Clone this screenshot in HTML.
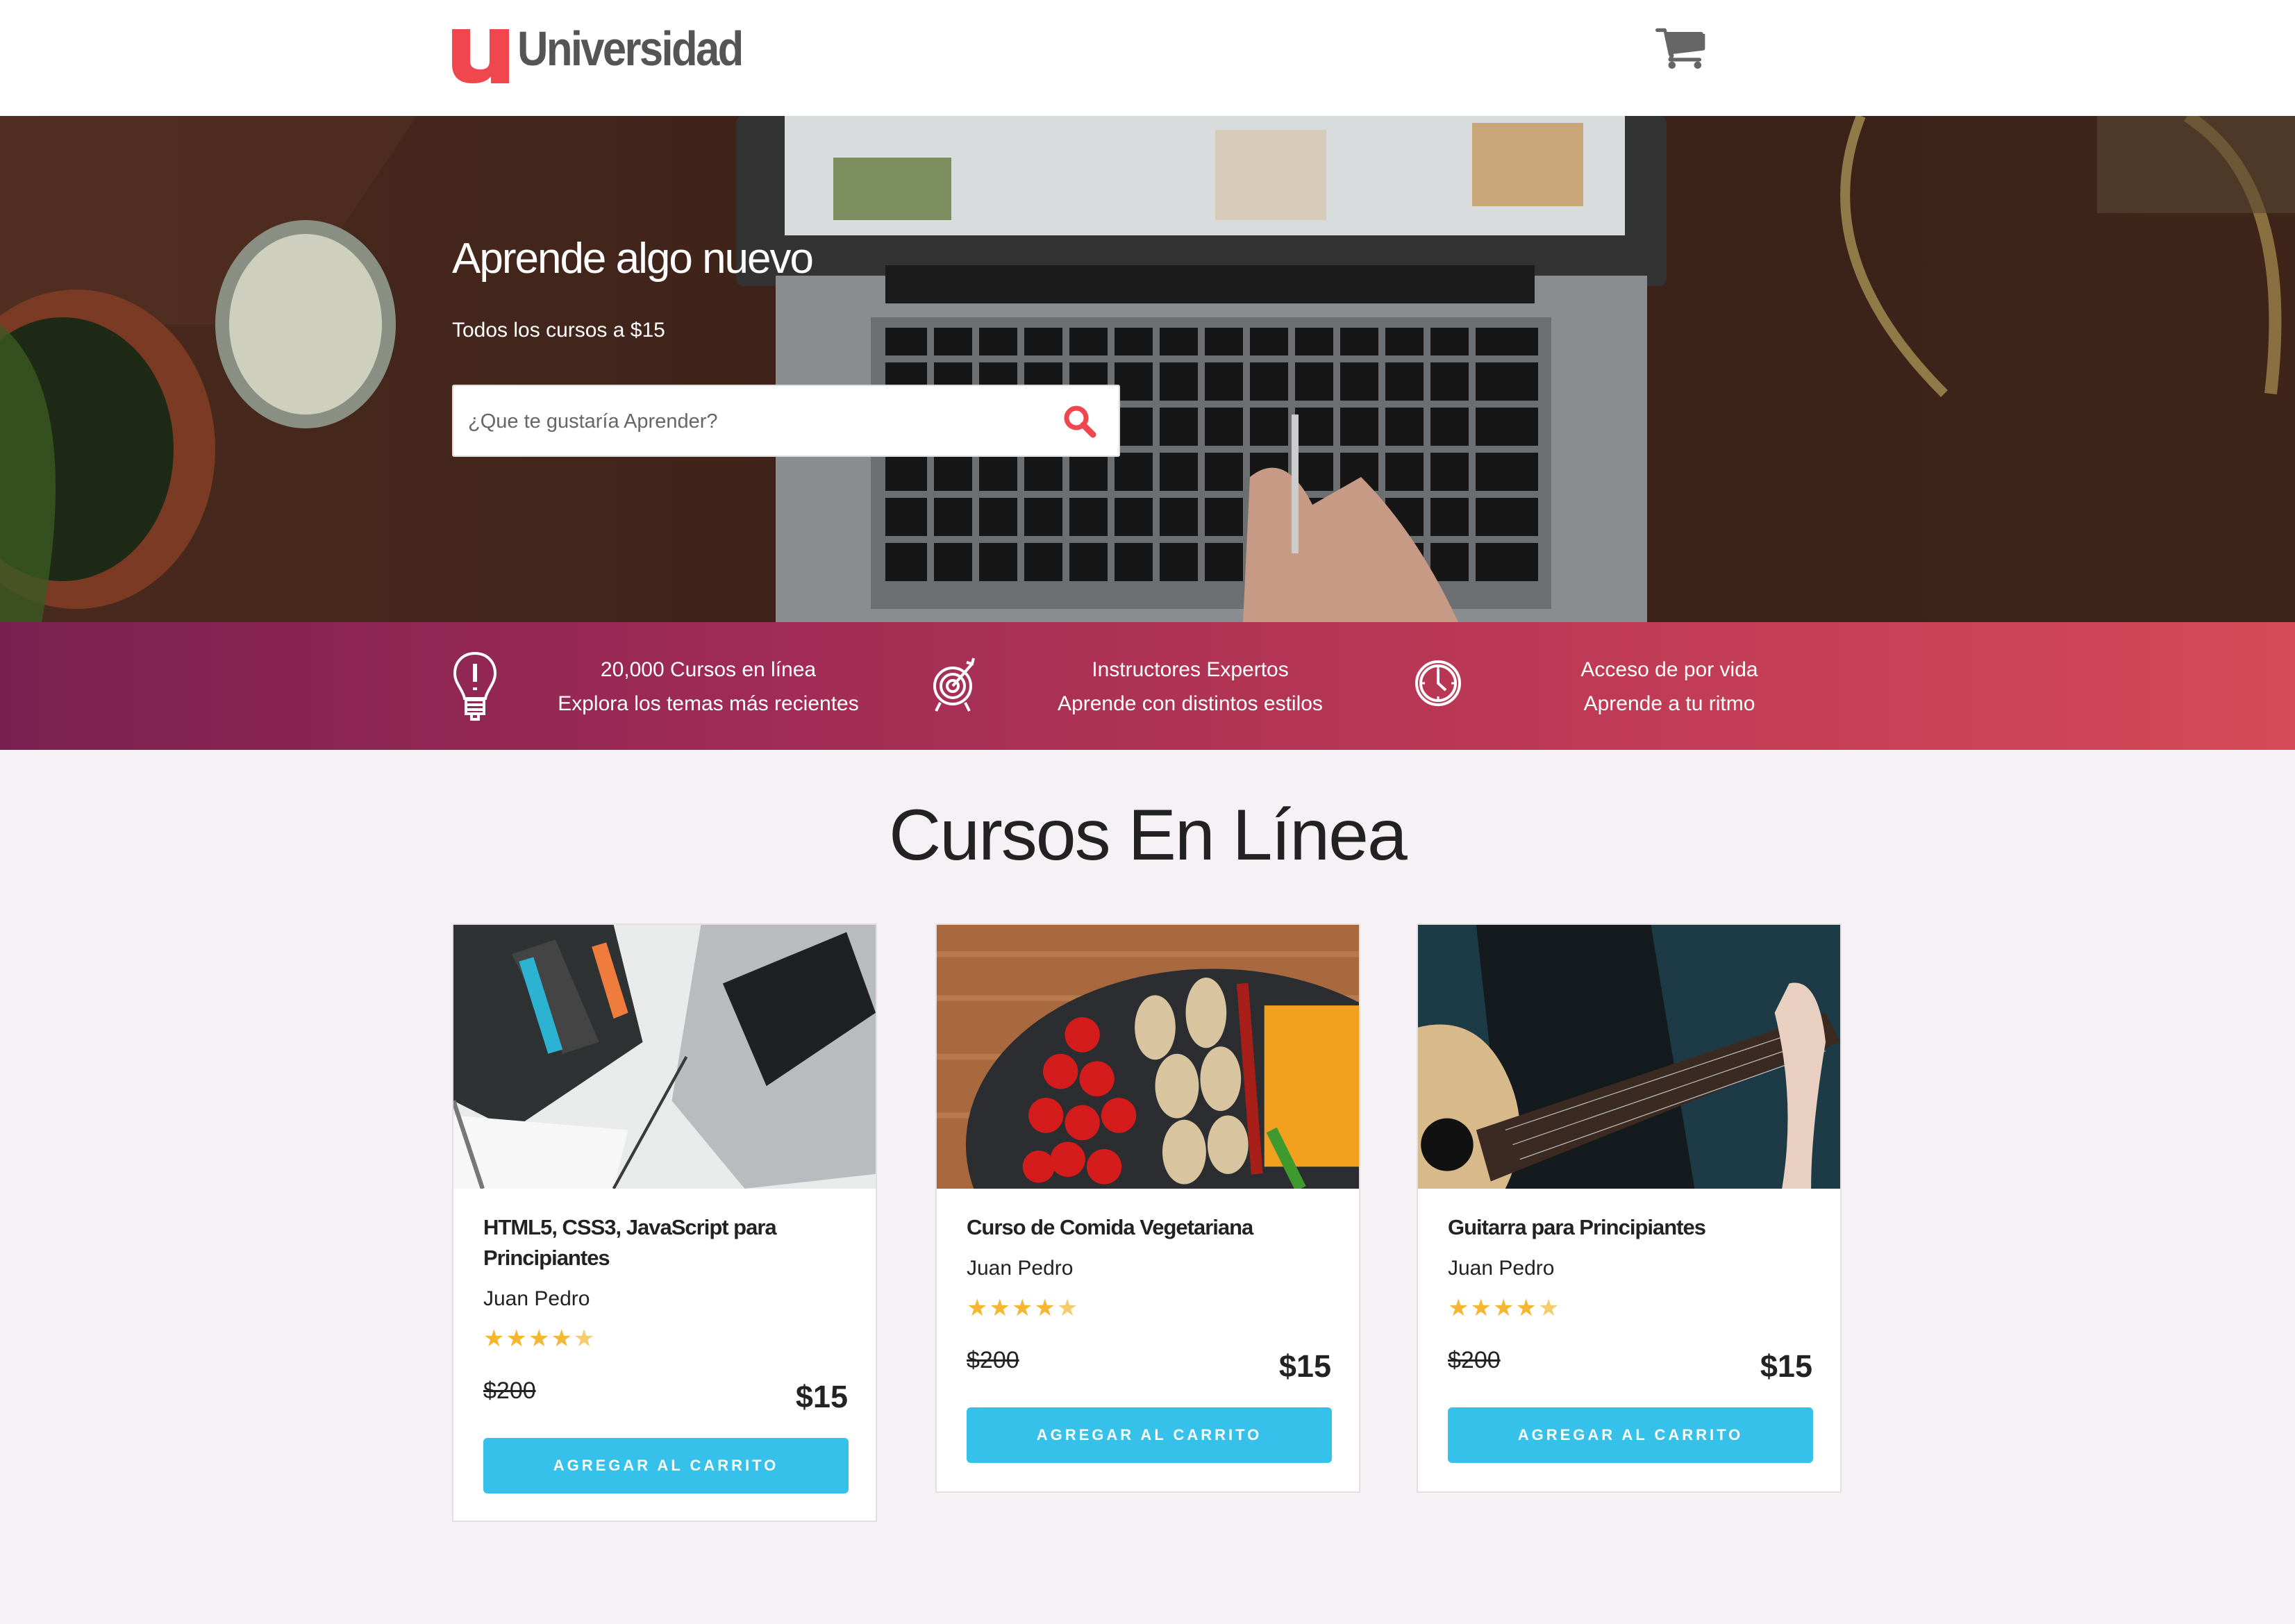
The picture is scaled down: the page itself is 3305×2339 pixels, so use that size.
<!DOCTYPE html>
<html><head><meta charset="utf-8"><style>
*{margin:0;padding:0;box-sizing:border-box}
body{width:3305px;height:2339px;background:#f5f1f4;font-family:"Liberation Sans",sans-serif;position:relative;overflow:hidden}
.abs{position:absolute}
header{position:absolute;left:0;top:0;width:3305px;height:167px;background:#fff}
.hero{position:absolute;left:0;top:167px;width:3305px;height:729px;overflow:hidden;background:#3d2219}
.bar{position:absolute;left:0;top:896px;width:3305px;height:184px;background:linear-gradient(90deg,#7a2050 0%,#a22c55 35%,#bf3a55 70%,#d44a58 100%)}
.bar .t{position:absolute;color:#fff;font-size:30px;line-height:49px;text-align:center;width:600px}
h2{position:absolute;left:0;width:3305px;text-align:center;top:1144px;font-size:104px;font-weight:400;color:#222;letter-spacing:-2px}
.card{position:absolute;top:1330px;width:612px;background:#fff;border:2px solid #e3dfe3}
.card svg{display:block}
.ct{position:absolute;left:43px;font-size:31px;font-weight:700;color:#222;line-height:44px;letter-spacing:-1px}
.au{position:absolute;left:43px;font-size:30px;color:#222}
.st{position:absolute;left:43px;color:#f5b731;font-size:34px;letter-spacing:2px}
.old{position:absolute;left:43px;font-size:34px;color:#222;text-decoration:line-through}
.new{position:absolute;right:40px;font-size:45px;font-weight:700;color:#222}
.btn{position:absolute;left:43px;width:526px;height:80px;background:#36c1ea;border-radius:6px;color:#fff;font-size:22px;font-weight:700;letter-spacing:4px;text-align:center;line-height:80px}
</style></head><body>
<header>
<svg class="abs" style="left:651px;top:42px" width="82" height="78" viewBox="0 0 82 78"><path d="M0 0H26V46Q26 58 41 58Q54 58 54 46V0H82V78H56V68Q48 78 30 78Q0 78 0 50Z" fill="#f0474f"/></svg>
<div class="abs" style="left:745px;top:30px;font-size:70px;font-weight:700;color:#555;letter-spacing:-3px;transform:scaleX(0.88);transform-origin:left">Universidad</div>
<svg class="abs" style="left:2384px;top:38px" width="74" height="64" viewBox="0 0 1792 1536"><path fill="#666" d="M704 1344q0 52-38 90t-90 38-90-38-38-90 38-90 90-38 90 38 38 90zm896 0q0 52-38 90t-90 38-90-38-38-90 38-90 90-38 90 38 38 90zm128-1088v512q0 24-16.5 42.5T1671 832L627 954q13 60 13 70 0 16-24 64h920q26 0 45 19t19 45-19 45-45 19H512q-26 0-45-19t-19-45q0-11 8-31.5t16-36 21.5-40T464 1010L287 187H64q-26 0-45-19T0 123t19-45 45-19h256q16 0 28.5 6.5T368 81t13 24.5 8 26 5.5 29.5 4.5 26h1201q26 0 45 19t19 45z"/></svg>
</header>
<div class="hero">
<svg width="3305" height="729" viewBox="0 0 3305 729" preserveAspectRatio="none">
<defs><linearGradient id="w" x1="0" x2="1"><stop offset="0" stop-color="#4a2a1e"/><stop offset=".5" stop-color="#3a2018"/><stop offset="1" stop-color="#3e2419"/></linearGradient></defs>
<rect width="3305" height="729" fill="url(#w)"/>
<path d="M0 0H600L400 300H0Z" fill="#5a3526" opacity=".4"/>
<ellipse cx="440" cy="300" rx="130" ry="150" fill="#8a8f84"/><ellipse cx="440" cy="300" rx="110" ry="130" fill="#cfcfbd"/>
<ellipse cx="110" cy="480" rx="200" ry="230" fill="#7a3a24"/><ellipse cx="90" cy="480" rx="160" ry="190" fill="#1f2a16"/>
<path d="M0 300Q120 400 60 729H0Z" fill="#3b5a22" opacity=".8"/>
<path d="M2680 0Q2600 200 2800 400" stroke="#8f7a48" stroke-width="14" fill="none"/>
<path d="M3150 0Q3305 100 3270 400" stroke="#8a7040" stroke-width="18" fill="none"/>
<rect x="3020" y="0" width="285" height="140" fill="#5a4630" opacity=".6"/>
<rect x="1060" y="0" width="1340" height="245" rx="10" fill="#333"/>
<rect x="1130" y="0" width="1210" height="172" fill="#d9dcdc"/>
<rect x="1200" y="60" width="170" height="90" fill="#7d8f5e"/><rect x="1750" y="20" width="160" height="130" fill="#d6ccb8"/><rect x="2120" y="10" width="160" height="120" fill="#c9a677"/>
<rect x="1117" y="230" width="1255" height="499" fill="#8a8d8f"/>
<rect x="1275" y="215" width="935" height="55" fill="#1b1b1b"/>
<rect x="1254" y="290" width="980" height="420" fill="#6c6f72"/>
<g fill="#161616">
<rect x="1275" y="305" width="940" height="40"/><rect x="1275" y="355" width="940" height="55"/><rect x="1275" y="420" width="940" height="55"/><rect x="1275" y="485" width="940" height="55"/><rect x="1275" y="550" width="940" height="55"/><rect x="1275" y="615" width="940" height="55"/>
</g>
<g stroke="#6c6f72" stroke-width="10">
<path d="M1340 305V670M1405 305V670M1470 305V670M1535 305V670M1600 305V670M1665 305V670M1730 305V670M1795 305V670M1860 305V670M1925 305V670M1990 305V670M2055 305V670M2120 305V670"/>
</g>
<path d="M1790 729L1800 520Q1850 480 1890 560L1960 520Q2040 600 2100 729Z" fill="#c79a86"/>
<rect x="1860" y="430" width="10" height="200" fill="#ccc"/>
</svg>
<div class="abs" style="left:651px;top:170px;font-size:62px;color:#fff;letter-spacing:-2px">Aprende algo nuevo</div>
<div class="abs" style="left:651px;top:292px;font-size:30px;color:#fff">Todos los cursos a $15</div>
<div class="abs" style="left:651px;top:387px;width:962px;height:104px;background:#fff;border:2px solid #ddd;border-radius:3px"></div>
<div class="abs" style="left:674px;top:424px;font-size:29px;color:#666">¿Que te gustaría Aprender?</div>
<svg class="abs" style="left:1530px;top:415px" width="50" height="50" viewBox="0 0 50 50"><circle cx="20" cy="20" r="14" stroke="#f0474f" stroke-width="7" fill="none"/><path d="M30 30L44 44" stroke="#f0474f" stroke-width="9" stroke-linecap="round"/></svg>
</div>
<div class="bar">
<svg class="abs" style="left:651px;top:42px" width="66" height="100" viewBox="0 0 66 100" fill="none" stroke="#fff" stroke-width="4"><path d="M33 3C15 3 4 16 4 32c0 14 12 24 14 36h30c2-12 14-22 14-36C62 16 51 3 33 3Z"/><path d="M33 18V44M33 52V56" stroke-width="6"/><rect x="20" y="70" width="26" height="20"/><path d="M20 77H46M20 84H46M28 90V98H38V90"/></svg>
<div class="t" style="left:720px;top:44px">20,000 Cursos en línea<br>Explora los temas más recientes</div>
<svg class="abs" style="left:1342px;top:50px" width="68" height="80" viewBox="0 0 68 80" fill="none" stroke="#fff" stroke-width="4"><circle cx="30" cy="42" r="26"/><circle cx="30" cy="42" r="17"/><circle cx="30" cy="42" r="8"/><path d="M30 42L58 10M50 8L58 10L60 2M12 66L6 78M48 66L54 78"/></svg>
<div class="t" style="left:1414px;top:44px">Instructores Expertos<br>Aprende con distintos estilos</div>
<svg class="abs" style="left:2036px;top:52px" width="70" height="72" viewBox="0 0 70 72" fill="none" stroke="#fff" stroke-width="4"><circle cx="35" cy="36" r="31"/><circle cx="35" cy="36" r="25"/><path d="M35 16V36L46 46"/><path d="M35 13V17M35 55V59M12 36H16M54 36H58" stroke-width="3"/></svg>
<div class="t" style="left:2104px;top:44px">Acceso de por vida<br>Aprende a tu ritmo</div>
</div>
<h2>Cursos En Línea</h2>

<div class="card" style="left:651px;height:862px">
<svg width="608" height="380" viewBox="0 0 290 180" preserveAspectRatio="none">
<rect width="290" height="180" fill="#e9eaea"/>
<path d="M0 0H110L130 80L40 140L0 120Z" fill="#2f3233"/>
<path d="M40 20L70 10L100 80L75 88Z" fill="#444"/><path d="M45 25L55 22L75 85L65 88Z" fill="#2bb3d1"/><path d="M95 15L105 12L120 60L110 64Z" fill="#ef7c3d"/>
<path d="M170 0H290V170L200 180L150 120Z" fill="#b9bcbe"/><path d="M185 40L270 5L290 60L215 110Z" fill="#1f2022"/>
<path d="M0 130L120 140L110 180H0Z" fill="#f7f7f7"/><path d="M0 120L20 180" stroke="#777" stroke-width="3"/>
<path d="M110 180L160 90" stroke="#3a3a3a" stroke-width="2"/>
</svg>
<div class="ct" style="top:414px">HTML5, CSS3, JavaScript para<br>Principiantes</div>
<div class="au" style="top:522px">Juan Pedro</div>
<div class="st" style="top:576px">★★★★<span style="opacity:.7">★</span></div>
<div class="old" style="top:652px">$200</div>
<div class="new" style="top:654px">$15</div>
<div class="btn" style="top:739px">AGREGAR AL CARRITO</div>
</div>

<div class="card" style="left:1347px;height:820px">
<svg width="608" height="380" viewBox="0 0 290 180" preserveAspectRatio="none">
<rect width="290" height="180" fill="#a8693f"/>
<path d="M0 20H290M0 50H290M0 90H290M0 130H290" stroke="#c48655" stroke-width="4" opacity=".6"/>
<ellipse cx="190" cy="150" rx="170" ry="120" fill="#2b2d30"/>
<g fill="#d51c1c"><circle cx="100" cy="75" r="12"/><circle cx="85" cy="100" r="12"/><circle cx="110" cy="105" r="12"/><circle cx="75" cy="130" r="12"/><circle cx="100" cy="135" r="12"/><circle cx="125" cy="130" r="12"/><circle cx="90" cy="160" r="12"/><circle cx="115" cy="165" r="12"/><circle cx="70" cy="165" r="11"/></g>
<g fill="#d9c4a0"><ellipse cx="150" cy="70" rx="14" ry="22"/><ellipse cx="185" cy="60" rx="14" ry="24"/><ellipse cx="165" cy="110" rx="15" ry="22"/><ellipse cx="195" cy="105" rx="14" ry="22"/><ellipse cx="170" cy="155" rx="15" ry="22"/><ellipse cx="200" cy="150" rx="14" ry="20"/></g>
<rect x="225" y="55" width="65" height="110" fill="#f2a020"/><path d="M210 40L220 170" stroke="#a81f1a" stroke-width="8"/><path d="M230 140L250 180" stroke="#3e9a2f" stroke-width="8"/>
</svg>
<div class="ct" style="top:414px">Curso de Comida Vegetariana</div>
<div class="au" style="top:478px">Juan Pedro</div>
<div class="st" style="top:532px">★★★★<span style="opacity:.7">★</span></div>
<div class="old" style="top:608px">$200</div>
<div class="new" style="top:610px">$15</div>
<div class="btn" style="top:695px">AGREGAR AL CARRITO</div>
</div>

<div class="card" style="left:2040px;height:820px">
<svg width="608" height="380" viewBox="0 0 290 180" preserveAspectRatio="none">
<rect width="290" height="180" fill="#1c3b47"/>
<path d="M40 0H160L190 180H60Z" fill="#141a1e"/>
<path d="M0 70Q40 60 60 100Q80 140 60 180H0Z" fill="#d8b98a"/>
<path d="M40 140L280 60L290 80L50 175Z" fill="#3a2a22"/>
<path d="M60 140L270 70M65 150L275 78M70 160L280 86" stroke="#bbb" stroke-width=".6"/>
<path d="M255 40Q275 35 280 80Q270 140 270 180H250Q260 120 245 60Z" fill="#e8cfc0"/>
<circle cx="20" cy="150" r="18" fill="#111"/>
</svg>
<div class="ct" style="top:414px">Guitarra para Principiantes</div>
<div class="au" style="top:478px">Juan Pedro</div>
<div class="st" style="top:532px">★★★★<span style="opacity:.7">★</span></div>
<div class="old" style="top:608px">$200</div>
<div class="new" style="top:610px">$15</div>
<div class="btn" style="top:695px">AGREGAR AL CARRITO</div>
</div>
</body></html>
